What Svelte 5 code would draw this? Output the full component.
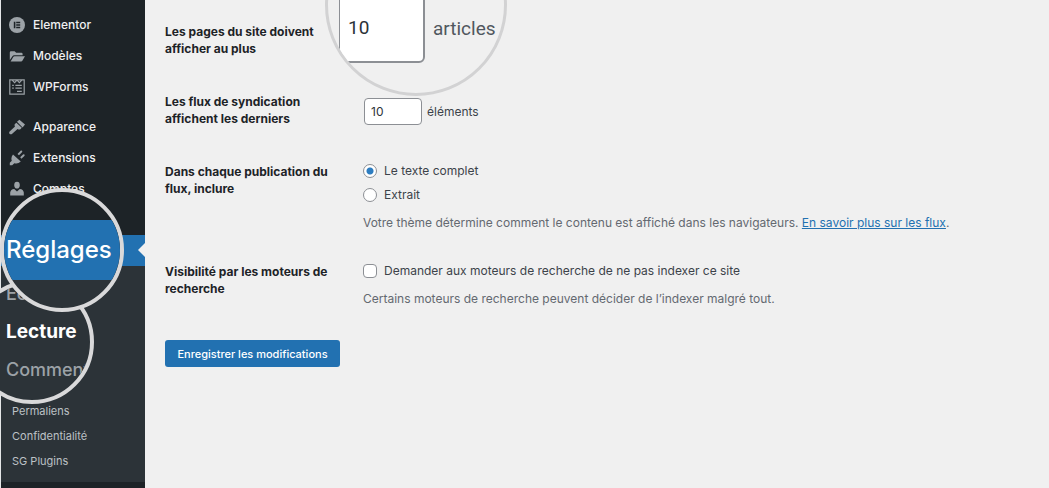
<script lang="ts">
  let postsPerPage = $state('10');
  let postsPerFeed = $state('10');
  let feedContent = $state('full');
  let hideFromSearch = $state(false);

  const menu = [
    { label: 'Elementor', icon: 'elementor' },
    { label: 'Modèles', icon: 'folder' },
    { label: 'WPForms', icon: 'forms' },
    { label: 'Apparence', icon: 'brush', separated: true },
    { label: 'Extensions', icon: 'plug' },
    { label: 'Comptes', icon: 'user' },
  ];
</script>

<div class="admin">
  <nav class="sidebar" aria-label="Menu principal">
    <ul class="menu">
      {#each menu as item}
        <li class:separated={item.separated}>
          <a href="#{item.label}">
            <svg class="icon" viewBox="0 0 20 20" aria-hidden="true">
              {#if item.icon === 'elementor'}
                <circle cx="10" cy="10" r="10" />
                <path class="dark" d="M6 6h2v8H6zM9 6h5v1.7H9zM9 9.2h5v1.7H9zM9 12.3h5V14H9z" />
              {:else if item.icon === 'folder'}
                <path d="M1 15V5.500Q1 4 2.500 4H7l2 2h6.500Q17 6 17 7.500V9H6.500Q5 9 4.300 10.300z" />
                <path d="M2 17l3.500-6Q6 10.200 7 10.200H20L16.700 16q-.5 1-1.600 1z" />
              {:else if item.icon === 'forms'}
                <path class="line" d="M1 1h18v18H1zM4 1.500L7 4.500l3-3 3 3 3-3M4 8h2M8 8h8M4 11.500h2M8 11.500h8M10 15.500h6" />
              {:else if item.icon === 'brush'}
                <path d="M10 3.500L13 1l7 6-3 3.600zM9.200 4.600l6.800 6.400-1.800 1.800q-1.700.9-3.500-.4L4 18.500Q2.500 19.700 1 18.600T.8 15.500L7.500 9.300Q6.400 7.500 7.400 6.300z" />
              {:else if item.icon === 'plug'}
                <path d="M10.600 5L14.500 1q.9-.7 1.700 0t0 1.700L12.500 6.600zM14 9.200l3.500-3.500q.9-.7 1.700 0t0 1.700L15.500 11zM5 5.500l9.700 9q-3.500 3.200-8 2L4 19H1v-3l2.500-2.500Q2 9 5 5.500z" />
              {:else if item.icon === 'user'}
                <path d="M10 1q3.500 0 3.500 4.200Q13.200 9.500 10 9.500T6.500 5.200Q6.500 1 10 1zM1.500 18v-3.500Q2 10.500 6.500 10L10 13l3.500-3q4.500.5 5 4.500V18z" />
              {/if}
            </svg>
            {item.label}
          </a>
        </li>
      {/each}
      <li class="current">
        <a class="lens lens-settings" href="#reglages">
          <span class="lens-band">Réglages</span>
        </a>
      </li>
    </ul>

    <ul class="submenu">
      <li class="reading">
        <div class="lens lens-reading">
          <a href="#ecriture">Écriture</a>
          <a class="active" href="#lecture" aria-current="page">Lecture</a>
          <a href="#commentaires">Commentaires</a>
        </div>
      </li>
      <li><a href="#permaliens">Permaliens</a></li>
      <li><a href="#confidentialite">Confidentialité</a></li>
      <li><a href="#sg">SG Plugins</a></li>
    </ul>
  </nav>

  <main class="content">
    <form onsubmit={(e) => e.preventDefault()}>
      <table class="form-table">
        <tbody>
          <tr>
            <th scope="row"><label for="posts-per-page">Les pages du site doivent afficher au plus</label></th>
            <td class="zoomed">
              <div class="lens lens-posts">
                <input id="posts-per-page" type="text" inputmode="numeric" bind:value={postsPerPage} />
                <span>articles</span>
              </div>
            </td>
          </tr>
          <tr>
            <th scope="row"><label for="posts-per-feed">Les flux de syndication affichent les derniers</label></th>
            <td>
              <div class="feed-count">
                <input id="posts-per-feed" type="text" inputmode="numeric" bind:value={postsPerFeed} />
                <span>éléments</span>
              </div>
            </td>
          </tr>
          <tr>
            <th scope="row">Dans chaque publication du flux, inclure</th>
            <td>
              <label class="choice">
                <input type="radio" name="feed" value="full" bind:group={feedContent} />
                Le texte complet
              </label>
              <label class="choice">
                <input type="radio" name="feed" value="excerpt" bind:group={feedContent} />
                Extrait
              </label>
              <p class="description">
                Votre thème détermine comment le contenu est affiché dans les navigateurs.
                <a href="#flux">En savoir plus sur les flux</a>.
              </p>
            </td>
          </tr>
          <tr>
            <th scope="row">Visibilité par les moteurs de recherche</th>
            <td>
              <label class="choice">
                <input type="checkbox" bind:checked={hideFromSearch} />
                Demander aux moteurs de recherche de ne pas indexer ce site
              </label>
              <p class="description">
                Certains moteurs de recherche peuvent décider de l’indexer malgré tout.
              </p>
            </td>
          </tr>
        </tbody>
      </table>
      <button class="submit" type="submit">Enregistrer les modifications</button>
    </form>
  </main>
</div>

<style>
  :global(body) {
    background: #f0f0f0;
  }

  .admin {
    display: flex;
    min-height: 100vh;
    overflow: hidden;
    background: #f0f0f0;
    color: #3c434a;
    font-family: Inter, "Liberation Sans", sans-serif;
    font-size: 12px;
  }

  ul {
    margin: 0;
    padding: 0;
    list-style: none;
  }

  .sidebar {
    flex: 0 0 144px;
    padding-top: 9px;
    border-left: 1px solid #e4e6e7;
    background: #1d2327;
  }

  .menu li:not(.current) a {
    display: flex;
    align-items: center;
    gap: 8px;
    height: 31px;
    padding-left: 8px;
    color: #f0f0f1;
    font-weight: 500;
    text-decoration: none;
  }

  .separated {
    margin-top: 9px;
  }

  .icon {
    flex: none;
    width: 16px;
    height: 16px;
    fill: #9ca2a7;
  }

  .icon .dark {
    fill: #1d2327;
  }

  .icon .line {
    fill: none;
    stroke: #9ca2a7;
    stroke-width: 1.5;
  }

  .current {
    position: relative;
    z-index: 2;
    height: 31px;
    margin-top: 31px;
    background: #2271b1;
  }

  .current::after {
    content: "";
    position: absolute;
    top: 8px;
    right: 0;
    border: 7px solid transparent;
    border-left-width: 0;
    border-right-color: #f0f0f0;
  }

  .submenu {
    padding: 8px 0;
    background: #2c3338;
  }

  .submenu a {
    display: block;
    padding-left: 11px;
    color: #bcc1c5;
    font-size: 11px;
    line-height: 25px;
    text-decoration: none;
  }

  .reading {
    position: relative;
    z-index: 1;
    height: 125px;
  }

  .lens {
    position: absolute;
    box-sizing: border-box;
    overflow: hidden;
    border: 4px solid #d9d9da;
    border-radius: 50%;
  }

  .lens-settings {
    top: -47px;
    left: -1px;
    display: flex;
    flex-direction: column;
    justify-content: center;
    width: 124px;
    height: 124px;
    background: linear-gradient(#1d2327 50%, #2c3338 50%);
    color: #fff;
    text-decoration: none;
  }

  .lens-band {
    padding-left: 2px;
    background: #2271b1;
    font-size: 24px;
    font-weight: 500;
    line-height: 60px;
  }

  .lens-reading {
    top: 6px;
    left: -31px;
    display: flex;
    flex-direction: column;
    justify-content: center;
    width: 124px;
    height: 124px;
    padding-bottom: 20px;
    background: #2c3338;
  }

  .lens-reading a {
    padding-left: 32px;
    color: #9ca2a7;
    font-size: 18px;
    font-weight: 500;
    line-height: 38px;
  }

  .lens-reading .active {
    color: #fff;
    font-size: 19px;
    font-weight: 700;
  }

  .content {
    flex: 1;
    min-width: 0;
    padding: 5px 20px 20px;
  }

  .form-table {
    width: 100%;
    border-collapse: collapse;
  }

  th {
    box-sizing: border-box;
    width: 198px;
    padding: 18px 20px 18px 0;
    color: #1d2327;
    font-weight: 700;
    line-height: 17px;
    text-align: left;
    vertical-align: top;
  }

  td {
    padding: 14px 0 12px;
  }

  .zoomed {
    position: relative;
  }

  .lens-posts {
    top: -91px;
    left: -38px;
    display: flex;
    align-items: flex-end;
    gap: 8px;
    width: 182px;
    height: 182px;
    padding: 0 0 30px 11px;
    border: 3px solid #d2d2d3;
    background: #f0f0f0;
    color: #50575e;
    font-family: Roboto, "Liberation Sans", sans-serif;
    font-size: 19px;
    line-height: 68px;
  }

  .feed-count {
    display: flex;
    align-items: center;
    gap: 5px;
  }

  input[type="text"] {
    box-sizing: border-box;
    width: 58px;
    height: 27px;
    margin-left: 1px;
    padding: 0 6px;
    border: 1px solid #8c8f94;
    border-radius: 4px;
    background: #fff;
    color: #2c3338;
    font: inherit;
  }

  .lens-posts input[type="text"] {
    width: 86px;
    height: 70px;
    margin: 0;
    padding-left: 8px;
    border-width: 1px 2px 2px 1px;
    border-radius: 6px;
  }

  .choice {
    display: flex;
    align-items: center;
    gap: 7px;
    line-height: 24px;
  }

  input[type="radio"],
  input[type="checkbox"] {
    appearance: none;
    box-sizing: border-box;
    width: 14px;
    height: 14px;
    margin: 0;
    border: 1px solid #8c8f94;
    border-radius: 50%;
    background: #fff;
  }

  input[type="checkbox"] {
    border-radius: 4px;
  }

  input[type="radio"]:checked {
    background: radial-gradient(circle, #2e7dc0 3px, #fff 4px);
  }

  input[type="checkbox"]:checked {
    background: #2271b1;
  }

  .description {
    margin: 6px 0 0;
    color: #646970;
    line-height: 20px;
  }

  .description a {
    color: #2271b1;
  }

  .submit {
    min-width: 175px;
    height: 27px;
    margin-top: 19px;
    padding: 0 10px;
    border: 0;
    border-radius: 3px;
    background: #2271b1;
    color: #fff;
    font: inherit;
    font-size: 11px;
    font-weight: 500;
  }
</style>
